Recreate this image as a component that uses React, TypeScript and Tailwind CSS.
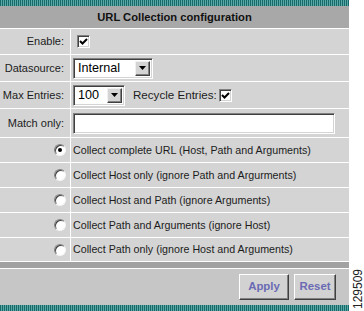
import { ReactNode } from "react";

const cell = "bg-[#d4d4d4] flex items-center";

const Check = ({ checked }: { checked?: boolean }) => (
  <div className="w-[13px] h-[13px] bg-white border border-t-[#808080] border-l-[#808080] border-b-white border-r-white shadow-[inset_1px_1px_0_#404040,inset_-1px_-1px_0_#d4d4d4] flex items-center justify-center">
    {checked && (
      <svg width="9" height="9" viewBox="0 0 9 9">
        <path d="M1 4 L3.5 6.5 L8 2" stroke="#000" strokeWidth="2" fill="none" />
      </svg>
    )}
  </div>
);

const Radio = ({ on }: { on?: boolean }) => (
  <div className="w-[12px] h-[12px] rounded-full bg-white border border-t-[#808080] border-l-[#808080] border-b-[#f4f4f4] border-r-[#f4f4f4] shadow-[inset_1px_1px_0_#404040] flex items-center justify-center">
    {on && <div className="w-[4px] h-[4px] rounded-full bg-black" />}
  </div>
);

const Select = ({ value, width }: { value: string; width: string }) => (
  <div className={`${width} h-[21px] flex bg-white border border-t-[#808080] border-l-[#808080] border-b-white border-r-white shadow-[inset_1px_1px_0_#404040,inset_-1px_-1px_0_#d4d4d4] p-[2px]`}>
    <span className="flex-1 pl-[2px] text-[12.6px] leading-[15px] text-black">{value}</span>
    <div className="w-[15px] h-[15px] bg-[#d4d4d4] border border-t-[#f0f0f0] border-l-[#f0f0f0] border-b-[#404040] border-r-[#404040] shadow-[inset_-1px_-1px_0_#808080] flex items-center justify-center">
      <svg width="7" height="4" viewBox="0 0 7 4">
        <path d="M0 0 H7 L3.5 4 Z" fill="#000" />
      </svg>
    </div>
  </div>
);

const Row = ({ label, children, h }: { label: ReactNode; children: ReactNode; h: string }) => (
  <>
    <div className={`${cell} ${h} justify-end pr-[6px] text-[11px]`}>{label}</div>
    <div className={`${cell} ${h} pl-[2px]`}>{children}</div>
  </>
);

const options = [
  "Collect complete URL (Host, Path and Arguments)",
  "Collect Host only (ignore Path and Argurments)",
  "Collect Host and Path (ignore Arguments)",
  "Collect Path and Arguments (ignore Host)",
  "Collect Path only (ignore Host and Arguments)",
];

const teal = "h-[6px] bg-[repeating-linear-gradient(90deg,#176a69_0px,#176a69_1px,#5aa8a6_1px,#5aa8a6_2px)]";

export default function App() {
  return (
    <div className="flex w-[364px] h-[311px] bg-white font-['Liberation_Sans',Arial,sans-serif] text-[10.7px] text-[#1c1c1c]">
      <div className="w-[349px] flex flex-col">
        <div className={teal} />
        <div className="h-[22px] bg-[#a8a8a8] flex items-center justify-center font-bold text-[11.2px] text-[#111]">
          URL Collection configuration
        </div>
        <div className="grid grid-cols-[70px_1fr] gap-px bg-white py-px">
          <Row label="Enable:" h="h-[25px]">
            <div className="ml-[4px]">
              <Check checked />
            </div>
          </Row>
          <Row label="Datasource:" h="h-[26px]">
            <Select value="Internal" width="w-[80px]" />
          </Row>
          <Row label="Max Entries:" h="h-[26px]">
            <Select value="100" width="w-[52px]" />
            <span className="ml-[8px] mr-[2px] text-[11.6px]">Recycle Entries:</span>
            <Check checked />
          </Row>
          <Row label="Match only:" h="h-[28px]">
            <div className="w-[262px] h-[21px] bg-white border border-t-[#808080] border-l-[#808080] border-b-white border-r-white shadow-[inset_1px_1px_0_#404040,inset_-1px_-1px_0_#d4d4d4]" />
          </Row>
          {options.map((o, i) => (
            <div key={o} className="contents">
              <div className={`${cell} ${i === 4 ? "h-[23px]" : "h-[24px]"} justify-end pr-[4px]`}>
                <Radio on={i === 0} />
              </div>
              <div className={`${cell} ${i === 4 ? "h-[23px]" : "h-[24px]"} pl-[2px]`}>{o}</div>
            </div>
          ))}
        </div>
        <div className="h-[6px] bg-[#a2a2a2]" />
        <div className="h-px bg-white" />
        <div className="h-[36px] bg-[#c6c6c6] flex items-center justify-end gap-[5px] pr-[13px]">
          <button className="w-[50px] h-[26px] bg-[#d2d2d2] border border-t-white border-l-white border-b-[#404040] border-r-[#404040] shadow-[inset_-1px_-1px_0_#808080] font-bold text-[11.4px] text-[#6a6ab4]">
            Apply
          </button>
          <button className="w-[42px] h-[26px] bg-[#d2d2d2] border border-t-white border-l-white border-b-[#404040] border-r-[#404040] shadow-[inset_-1px_-1px_0_#808080] font-bold text-[11.4px] text-[#6a6ab4]">
            Reset
          </button>
        </div>
        <div className={teal} />
      </div>
      <div className="flex-1 flex flex-col justify-end items-center pl-[3px] pb-[2px]">
        <span className="[writing-mode:vertical-rl] rotate-180 text-[12px] leading-[11px] text-[#222]">129509</span>
      </div>
    </div>
  );
}
